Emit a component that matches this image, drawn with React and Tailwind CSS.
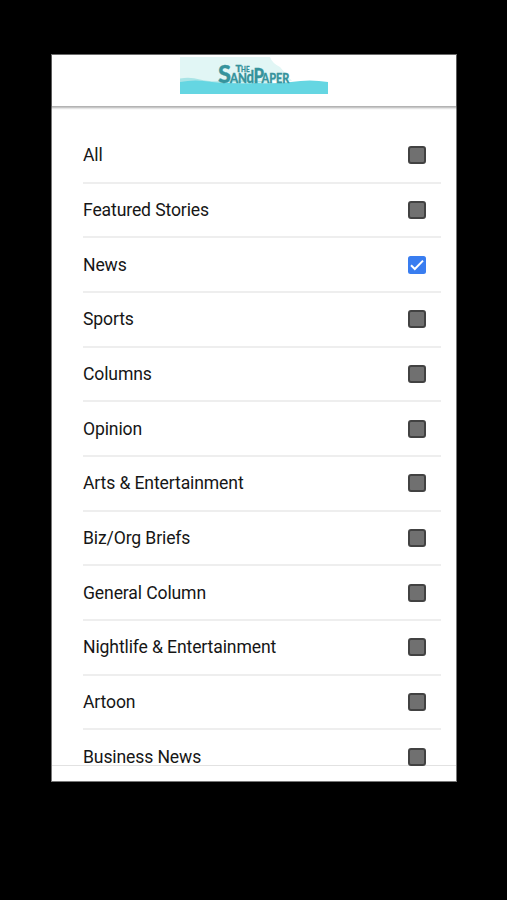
const CATEGORIES = [
  { name: 'All', checked: false },
  { name: 'Featured Stories', checked: false },
  { name: 'News', checked: true },
  { name: 'Sports', checked: false },
  { name: 'Columns', checked: false },
  { name: 'Opinion', checked: false },
  { name: 'Arts & Entertainment', checked: false },
  { name: 'Biz/Org Briefs', checked: false },
  { name: 'General Column', checked: false },
  { name: 'Nightlife & Entertainment', checked: false },
  { name: 'Artoon', checked: false },
  { name: 'Business News', checked: false },
];

export default function App() {
  return (
    <div className="h-screen bg-black pt-[54px] pl-[51px] font-['Roboto',sans-serif]">
      <div className="flex h-[728px] w-[406px] flex-col border border-[#777] bg-white">
        {/* Header */}
        <header className="z-10 flex h-[51px] shrink-0 justify-center bg-white pt-[2px] shadow-[0_1px_2px_1px_rgba(0,0,0,0.32)]">
          <Logo />
        </header>

        {/* Category list, the last row runs over the footer line */}
        <main className="z-10 h-[659px] shrink-0 pt-[23px] pr-[15px] pl-[31px]">
          {CATEGORIES.map(c => (
            <div
              key={c.name}
              className="flex h-[54.67px] items-center justify-between border-b-2 border-[#eeeeee] pr-[15px] last:border-transparent"
            >
              <span className="text-[17.6px] leading-5 tracking-[-0.13px] text-[#161616]">{c.name}</span>
              <Checkbox checked={c.checked} />
            </div>
          ))}
        </main>

        <footer className="flex-1 border-t border-[#e2e2e2] bg-white" />
      </div>
    </div>
  );
}

function Checkbox({ checked }) {
  if (!checked) {
    return <span className="size-[18px] rounded-[3px] border-2 border-[#424242] bg-[#707070]" />;
  }
  return (
    <span className="flex size-[18px] items-center justify-center rounded-[2.5px] bg-[#397df0]">
      <svg className="size-[18px]" viewBox="0 0 18 18" fill="none" stroke="#fff" strokeWidth="2">
        <path d="M3 9.3 6.8 13 15 4.6" />
      </svg>
    </span>
  );
}

function Logo() {
  return (
    <svg className="h-[37px] w-[148px]" viewBox="0 0 148 37">
      <path d="M0 0h90q2 6 10 10l12 14H0z" fill="#e1f6f5" />
      <path d="M0 21.5q10-2 20 1t32 1q24-1 42 2H0z" fill="#a8e4e6" />
      <path d="M0 25q15-3 32 0 22 2 45 1 20 1 34-1 19-3 37 0v12H0z" fill="#65d6e2" />
      <g fill="#36939c" stroke="#36939c" strokeWidth="0.3" fontFamily="Lato, sans-serif" fontWeight="900">
        <text x="38" y="25.5" fontSize="25" textLength="13" lengthAdjust="spacingAndGlyphs">S</text>
        <text x="50" y="25.5" fontSize="12.5" textLength="17" lengthAdjust="spacingAndGlyphs">AN</text>
        <text x="66.5" y="25.5" fontSize="16" textLength="7.5" lengthAdjust="spacingAndGlyphs">d</text>
        <text x="73.5" y="25.5" fontSize="20" textLength="10.5" lengthAdjust="spacingAndGlyphs">P</text>
        <text x="81.5" y="25.5" fontSize="14" textLength="28" lengthAdjust="spacingAndGlyphs">APER</text>
        <text x="55.5" y="14.5" fontSize="9.5" textLength="6" lengthAdjust="spacingAndGlyphs">T</text>
        <text x="61" y="14.5" fontSize="8" textLength="8.5" lengthAdjust="spacingAndGlyphs">HE</text>
      </g>
    </svg>
  );
}
